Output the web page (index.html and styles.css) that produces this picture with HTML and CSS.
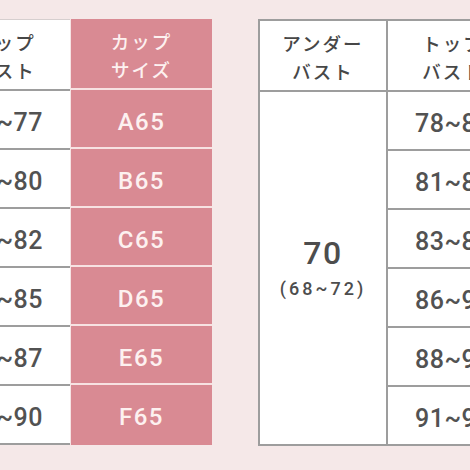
FILE: index.html
```html
<!DOCTYPE html>
<html lang="ja">
<head>
<meta charset="utf-8">
<link rel="stylesheet" href="styles.css">
</head>
<body>
<div class="page">
  <div class="left-table">
    <div class="col col-white">
      <div class="cell head">トップ<br>バスト</div>
      <div class="cell num">73~77</div>
      <div class="cell num">76~80</div>
      <div class="cell num">78~82</div>
      <div class="cell num">81~85</div>
      <div class="cell num">83~87</div>
      <div class="cell num">86~90</div>
    </div>
    <div class="col col-pink">
      <div class="cell head">カップ<br>サイズ</div>
      <div class="cell cup">A65</div>
      <div class="cell cup">B65</div>
      <div class="cell cup">C65</div>
      <div class="cell cup">D65</div>
      <div class="cell cup">E65</div>
      <div class="cell cup last">F65</div>
    </div>
  </div>
  <div class="right-table">
    <div class="col col-under">
      <div class="cell head">アンダー<br>バスト</div>
      <div class="under-body">
        <div class="under-main">70</div>
        <div class="under-range">(68~72)</div>
      </div>
    </div>
    <div class="col col-top">
      <div class="cell head">トップ<br>バスト</div>
      <div class="cell num">78~82</div>
      <div class="cell num">81~85</div>
      <div class="cell num">83~87</div>
      <div class="cell num">86~90</div>
      <div class="cell num">88~92</div>
      <div class="cell num last">91~95</div>
    </div>
  </div>
</div>
</body>
</html>
```
FILE: styles.css
```css
html, body {
  margin: 0;
  padding: 0;
}
body {
  width: 470px;
  height: 470px;
  overflow: hidden;
  background: #f5e8e8;
  font-family: Roboto, "Noto Sans CJK JP", sans-serif;
  color: #4d4d4d;
}
.page {
  display: flex;
  align-items: flex-start;
  padding-top: 19px;
  margin-left: -60px;
  gap: 46px;
}
.left-table {
  display: flex;
}
.col {
  display: flex;
  flex-direction: column;
  box-sizing: border-box;
}
.cell {
  box-sizing: border-box;
  height: 59px;
  display: flex;
  align-items: center;
  justify-content: center;
  text-align: center;
}
.head {
  height: 71px;
  font-family: "Noto Sans CJK JP", sans-serif;
  font-size: 18.5px;
  font-weight: 500;
  letter-spacing: 2px;
  line-height: 28px;
  padding-top: 2px;
  color: #474747;
}
.num {
  font-size: 25px;
  font-weight: 500;
  letter-spacing: 0.5px;
  padding-top: 6px;
  color: #525252;
}
.col-white {
  width: 130px;
  background: #fff;
  border-top: 1px solid #d6cfcf;
}
.col-white .cell {
  border-bottom: 2px solid #9d9d9d;
}
.col-pink {
  width: 142px;
  background: #d98a93;
  border-left: 1px solid #f6e4e4;
  color: #fdf1f0;
}
.col-pink .head {
  color: #fdf1f0;
}
.col-pink .cell {
  border-bottom: 2px solid #f7e2e2;
}
.col-pink .cell.last {
  border-bottom: none;
  height: 58px;
}
.cup {
  font-size: 24px;
  font-weight: 500;
  letter-spacing: 1.5px;
  padding-top: 6px;
}
.right-table {
  display: flex;
  background: #fff;
  border: 2px solid #9d9d9d;
  border-right: none;
}
.col-under {
  width: 128px;
  border-right: 2px solid #9d9d9d;
}
.col-under .head,
.col-top .cell {
  border-bottom: 2px solid #9d9d9d;
}
.col-top .cell.last {
  border-bottom: none;
  height: 57px;
}
.col-top {
  width: 140px;
}
.col-top .cell {
  padding-right: 10px;
}
.under-body {
  height: 352px;
  display: flex;
  flex-direction: column;
  align-items: center;
  justify-content: center;
  box-sizing: border-box;
  color: #4d4d4d;
}
.under-main {
  font-size: 32px;
  font-weight: 500;
  letter-spacing: 1.5px;
  line-height: 36px;
}
.under-range {
  font-size: 18px;
  font-weight: 500;
  letter-spacing: 3px;
  line-height: 24px;
  margin-top: 6px;
}
```
